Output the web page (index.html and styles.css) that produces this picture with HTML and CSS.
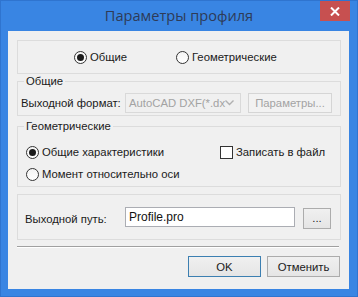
FILE: index.html
```html
<!DOCTYPE html>
<html lang="ru">
<head>
<meta charset="utf-8">
<title>Параметры профиля</title>
<link rel="stylesheet" href="styles.css">
</head>
<body>
<div class="window">
  <div class="titlebar">
    <span></span>
    <span class="title">Параметры профиля</span>
    <span class="close"><svg width="10" height="9" viewBox="0 0 10 9"><path d="M1 0.5 L9 8.5 M9 0.5 L1 8.5" stroke="#fff" stroke-width="2"/></svg></span>
  </div>
  <div class="client">
    <div class="box mode">
      <label class="opt opt-first"><span class="radio checked"></span>Общие</label>
      <label class="opt"><span class="radio"></span>Геометрические</label>
    </div>
    <fieldset class="group general">
      <legend>Общие</legend>
      <div class="row">
        <span class="lbl">Выходной формат:</span>
        <span class="combo"><span class="combo-text">AutoCAD DXF(*.dx</span><svg class="chev" width="9" height="6" viewBox="0 0 9 6"><path d="M0.5 0.5 L4.5 4.5 L8.5 0.5" fill="none" stroke="#b0b0b0" stroke-width="1.4"/></svg></span>
        <span class="btn disabled params">Параметры...</span>
      </div>
    </fieldset>
    <fieldset class="group geom">
      <legend>Геометрические</legend>
      <div class="geom-row">
        <label class="opt opt-wide"><span class="radio checked"></span>Общие характеристики</label>
        <label class="opt"><span class="check"></span>Записать в файл</label>
      </div>
      <div class="geom-row">
        <label class="opt"><span class="radio"></span>Момент относительно оси</label>
      </div>
    </fieldset>
    <div class="box path">
      <span class="lbl">Выходной путь:</span>
      <span class="input">Profile.pro</span>
      <span class="btn dots">...</span>
    </div>
    <div class="sep"></div>
    <div class="actions">
      <span class="btn ok">OK</span>
      <span class="btn">Отменить</span>
    </div>
  </div>
</div>
</body>
</html>
```
FILE: styles.css
```css
* { box-sizing: border-box; }
html, body { margin: 0; padding: 0; }
body { width: 358px; height: 297px; overflow: hidden; background: #3a87e4; }
.window {
  width: 358px; height: 297px;
  background: #3985e3;
  border: 1px solid #2f74cf;
  display: flex; flex-direction: column;
  font-family: "Liberation Sans", Arial, sans-serif;
  font-size: 11.3px; color: #1a1a1a;
}
.titlebar {
  height: 30px;
  display: grid;
  grid-template-columns: 1fr auto 1fr;
}
.title {
  font-family: "Open Sans", "Noto Sans", sans-serif;
  font-size: 14.6px; color: #2e3b57;
  line-height: 29px;
}
.close {
  justify-self: end;
  margin-right: 7px;
  width: 30px; height: 20px;
  background: #c75050;
  display: flex; align-items: center; justify-content: center;
}
.client {
  margin: 0 8px 0 7px;
  height: 258px;
  background: #f0f0f0;
  padding: 9px 8px 0 9px;
  display: flex; flex-direction: column;
}
.box { border: 1px solid #dcdcdc; }
.mode {
  height: 34px;
  display: flex; align-items: center;
  padding-left: 56px;
}
.opt { display: flex; align-items: center; white-space: nowrap; }
.opt-first { width: 102px; }
.radio {
  width: 13px; height: 13px; border-radius: 50%;
  border: 1px solid #333;
  background: linear-gradient(#f4f4f4, #fff);
  margin-right: 3px;
  display: inline-flex; align-items: center; justify-content: center;
  flex: none;
}
.radio.checked::after {
  content: ""; width: 7px; height: 7px; border-radius: 50%; background: #1b1b1b;
}
.check {
  width: 13px; height: 13px; border: 1px solid #333; background: #fff;
  margin-right: 3px; flex: none;
}
.group {
  margin: 0; border: 1px solid #dcdcdc;
  width: 324px; min-width: 0;
  padding: 5px 8px 2px 3px;
}
.group legend {
  padding: 0 2px; margin-left: 3px;
  line-height: 14px;
}
.row { display: flex; align-items: center; height: 20px; }
.lbl { width: 104px; flex: none; white-space: nowrap; }
.combo {
  width: 116px; height: 20px; border: 1px solid #d9d9d9; background: #f0f0f0;
  color: #a3a3a3; display: flex; align-items: center; padding: 0 6px 0 3px;
  flex: none;
}
.combo-text { white-space: nowrap; }
.chev { margin-left: auto; flex: none; }
.btn {
  height: 21px; border: 1px solid #acacac;
  background: linear-gradient(#f0f0f0, #e5e5e5);
  display: flex; align-items: center; justify-content: center;
  white-space: nowrap; flex: none;
}
.btn.disabled { border-color: #d5d5d5; background: #f2f2f2; color: #a3a3a3; }
.params { width: 84px; height: 20px; margin-left: 7px; }
.geom { margin-top: 3px; padding: 8px 3px 1px 3px; }
.geom-row { display: flex; align-items: center; height: 22px; padding-left: 5px; }
.opt-wide { width: 194px; }
.path {
  margin-top: 7px; height: 46px;
  display: flex; align-items: center;
  padding-left: 7px;
}
.path .lbl { width: 100px; padding-top: 3px; }
.input {
  width: 170px; height: 20px; border: 1px solid #abadb3; background: #fff;
  display: flex; align-items: center; padding-left: 3px; color: #111;
  font-size: 12px;
}
.dots { width: 28px; height: 21px; margin-left: 8px; margin-top: 2px; }
.sep {
  margin-top: 6px; height: 2px; width: 322px;
  border-top: 1px solid #a0a0a0; border-bottom: 1px solid #fff;
}
.actions {
  margin-top: 8px; display: flex; justify-content: flex-end; gap: 6px;
  padding-right: 1px;
}
.actions .btn { width: 73px; height: 21px; }
.btn.ok { border-color: #3c7fb1; }
```
